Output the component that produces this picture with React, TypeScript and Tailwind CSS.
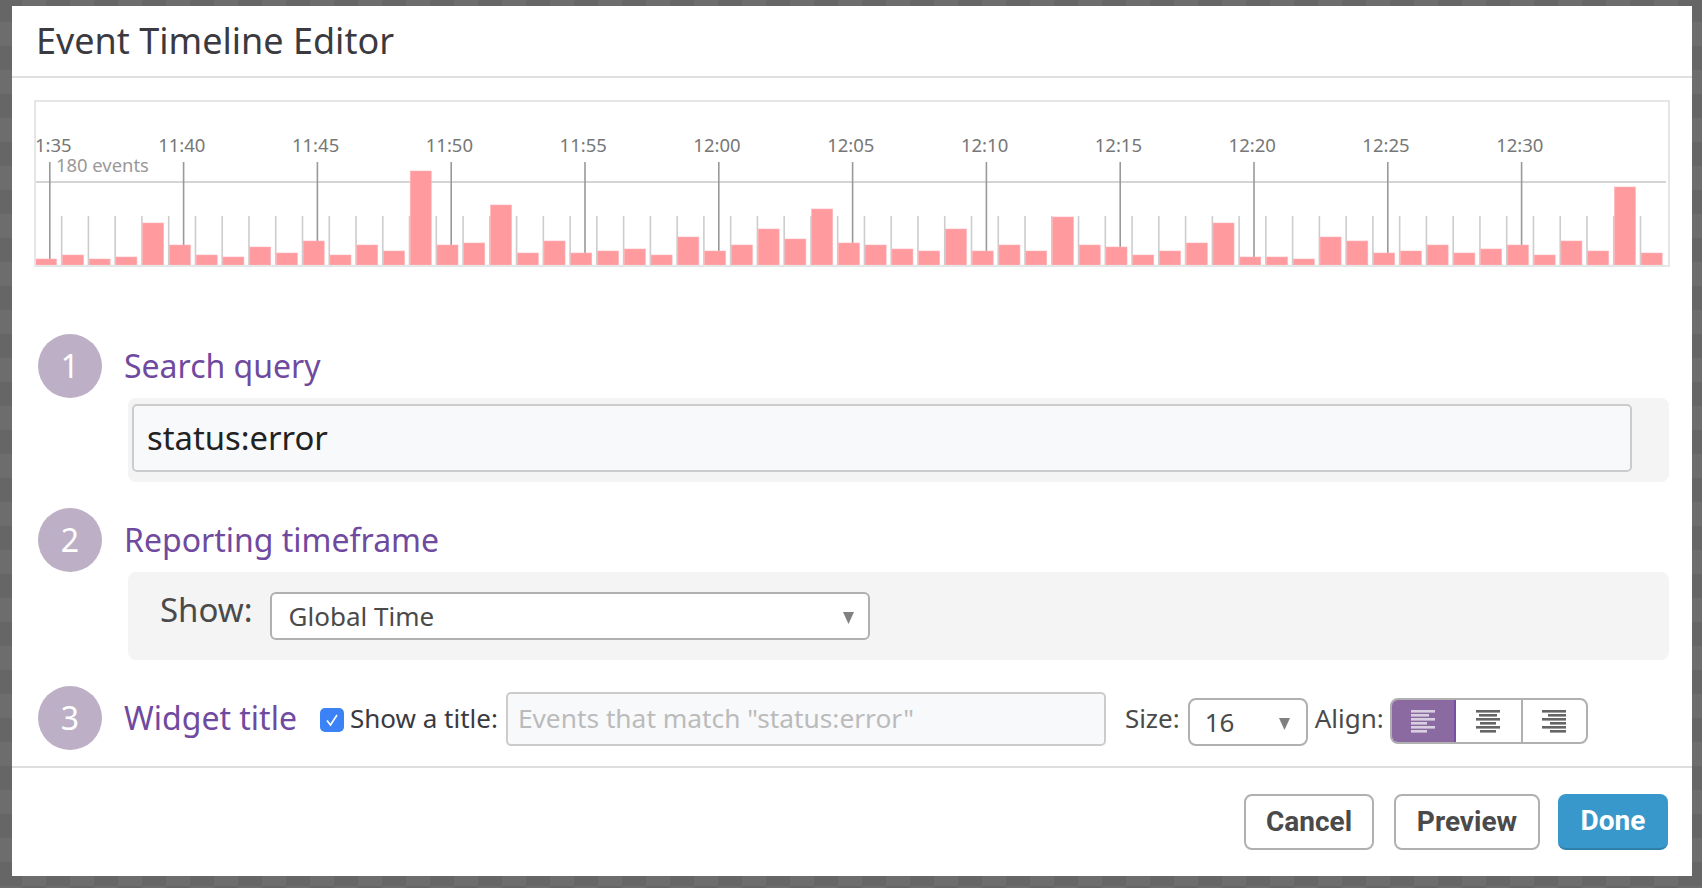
const FONT = "font-['Noto_Sans','Open_Sans',sans-serif]";

const barHeights = [
  6, 10, 6, 8, 42, 20, 10, 8, 18, 12, 24, 10, 20, 14, 94, 20, 22, 60, 12, 24, 12,
  14, 16, 10, 28, 14, 20, 36, 26, 56, 22, 20, 16, 14, 36, 14, 20, 14, 48, 20, 18,
  10, 14, 22, 42, 8, 8, 6, 28, 24, 12, 14, 20, 12, 16, 20, 10, 24, 14, 78, 12,
];

const timeLabels = ["11:40", "11:45", "11:50", "11:55", "12:00", "12:05", "12:10", "12:15", "12:20", "12:25", "12:30"];

function Timeline() {
  return (
    <div className="h-[167px] border-2 border-[#e6e6e6] overflow-hidden">
      <svg width="1632" height="163" className="block" style={{ fontFamily: "'Noto Sans', sans-serif" }}>
        <line x1="0" y1="80" x2="1630" y2="80" stroke="#d4d4d4" strokeWidth="2" />
        {barHeights.map((_, i) => (
          <rect key={i} x={i * 26.76 - 1.9} y="114" width="1.6" height="49" fill="#cdcdcd" />
        ))}
        <rect x="13" y="60" width="1.6" height="103" fill="#999999" />
        <text x="-1" y="50" fontSize="18.5" fill="#777777">
          1:35
        </text>
        {timeLabels.map((label, i) => (
          <g key={label}>
            <rect x={13 + (i + 1) * 133.8} y="60" width="1.6" height="103" fill="#999999" />
            <text x={12 + (i + 1) * 133.8} y="50" textAnchor="middle" fontSize="18.5" fill="#777777">
              {label}
            </text>
          </g>
        ))}
        <text x="20" y="70" fontSize="18.4" fill="#999999">
          180 events
        </text>
        {barHeights.map((h, i) => (
          <rect key={i} x={i * 26.76 - 0.4} y={163 - h} width="21" height={h} fill="#ff9b9f" stroke="#ffb3b6" strokeWidth="0.6" />
        ))}
      </svg>
    </div>
  );
}

function Step({ n, title }: { n: number; title: string }) {
  return (
    <div className="flex items-center gap-[22px]">
      <div className="flex h-16 w-16 shrink-0 items-center justify-center rounded-full bg-[#bdb0c6] text-[32px] text-white">
        {n}
      </div>
      <span className="text-[32px] text-[#6f4a9f] leading-[44px]">{title}</span>
    </div>
  );
}

function Caret() {
  return (
    <svg width="11" height="12" viewBox="0 0 11 12" className="mt-[4px]">
      <path d="M0 0H11L5.5 12Z" fill="#808080" />
    </svg>
  );
}

function AlignIcon({ kind, color }: { kind: "left" | "center" | "right"; color: string }) {
  const rows = [24, 18, 24, 16, 24, 16];
  return (
    <svg width="26" height="24" viewBox="0 0 26 24">
      {rows.map((w, i) => (
        <rect
          key={i}
          x={kind === "left" ? 1 : kind === "right" ? 25 - w : 13 - w / 2}
          y={1 + i * 4}
          width={w}
          height="2.6"
          fill={color}
        />
      ))}
    </svg>
  );
}

export default function App() {
  return (
    <div className={`${FONT} h-[888px] w-[1702px] bg-[#666666] bg-[conic-gradient(#6d6d6d_25%,#666666_0_50%,#6d6d6d_0_75%,#666666_0)] bg-[length:48px_48px] bg-[position:-2px_-2px] pt-[6px] pl-3`}>
      <div className="h-[870px] w-[1680px] bg-white">
        {/* Header */}
        <div className="flex h-[72px] items-center border-b-2 border-[#e0e0e0] pl-6">
          <h1 className="text-[36px] font-normal text-[#3a3a40]">Event Timeline Editor</h1>
        </div>

        <div className="pl-[22px] pr-[22px] pt-[22px]">
          <Timeline />
        </div>

        {/* Search query */}
        <div className="pl-[26px] pr-[23px] pt-[67px]">
          <Step n={1} title="Search query" />
          <div className="ml-[90px] h-[84px] rounded-lg bg-[#f4f4f4] pl-1 pr-[37px] pt-[6px]">
            <div className="flex h-[68px] items-center rounded-[5px] border-2 border-[#cccccc] bg-[#f8f9fb] pl-[13px] text-[32.8px] text-[#222222]">
              status:error
            </div>
          </div>
        </div>

        {/* Reporting timeframe */}
        <div className="pl-[26px] pr-[23px] pt-[26px]">
          <Step n={2} title="Reporting timeframe" />
          <div className="ml-[90px] flex h-[88px] items-start gap-[17px] rounded-lg bg-[#f4f4f4] pl-8 pt-5">
            <span className="text-[33px] leading-9 text-[#4a4a4a]">Show:</span>
            <div className="flex h-12 w-[600px] items-center justify-between rounded-md border-2 border-[#b0b0b0] bg-white pl-[17px] pr-[14px] text-[26px] text-[#4a4a4a]">
              Global Time
              <Caret />
            </div>
          </div>
        </div>

        {/* Widget title */}
        <div className="flex h-[108px] items-center border-b-2 border-[#dedede] pl-[26px] pr-[23px] pt-[10px]">
          <Step n={3} title="Widget title" />
          <div className="ml-[23px] mt-1 flex h-6 w-6 items-center justify-center rounded-[5px] bg-[#3b82f6]">
            <svg width="16" height="16" viewBox="0 0 16 16" fill="none" stroke="white" strokeWidth="1.6">
              <path d="M3 8.5L6.5 13L13 3" />
            </svg>
          </div>
          <span className="ml-[6px] text-[26px] text-[#3a3a40]">Show a title:</span>
          <div className="ml-2 mt-[2px] flex h-[54px] w-[600px] items-center rounded-[5px] border-2 border-[#cccccc] bg-[#f8f9fb] pl-[10px] text-[26.3px] text-[#bbbbbb]">
            Events that match "status:error"
          </div>
          <span className="ml-[19px] text-[26px] text-[#4a4a4a]">Size:</span>
          <div className="ml-2 mt-2 flex h-12 w-[120px] items-center justify-between rounded-lg border-2 border-[#b0b0b0] pl-[15px] pr-[16px] text-[26px] text-[#4a4a4a]">
            16
            <Caret />
          </div>
          <span className="ml-[7px] text-[26px] text-[#4a4a4a]">Align:</span>
          <div className="ml-[6px] mt-[5px] flex h-[46px] w-[198px] overflow-hidden rounded-lg border-2 border-[#b0b0b0]">
            <div className="-m-[2px] mr-0 flex w-[66px] items-center justify-center rounded-l-lg border-2 border-[#7a4fa3] bg-[#8a6aa0]">
              <AlignIcon kind="left" color="#d8cfe0" />
            </div>
            <div className="flex w-[67px] items-center justify-center border-r-2 border-[#b0b0b0]">
              <AlignIcon kind="center" color="#666666" />
            </div>
            <div className="flex flex-1 items-center justify-center">
              <AlignIcon kind="right" color="#666666" />
            </div>
          </div>
        </div>

        {/* Footer */}
        <div className="flex justify-end pr-6 pt-[26px] font-['Roboto',sans-serif] text-[28px] font-bold">
          <button className="h-14 w-[130px] rounded-lg border-2 border-[#b0b0b0] bg-white text-[#4a4a4a]">Cancel</button>
          <button className="ml-5 h-14 w-[146px] rounded-lg border-2 border-[#b0b0b0] bg-white text-[#4a4a4a]">Preview</button>
          <button className="ml-[18px] h-14 w-[110px] rounded-lg border-b-2 border-[#2f80ab] bg-[#3998cb] text-white">Done</button>
        </div>
      </div>
    </div>
  );
}
